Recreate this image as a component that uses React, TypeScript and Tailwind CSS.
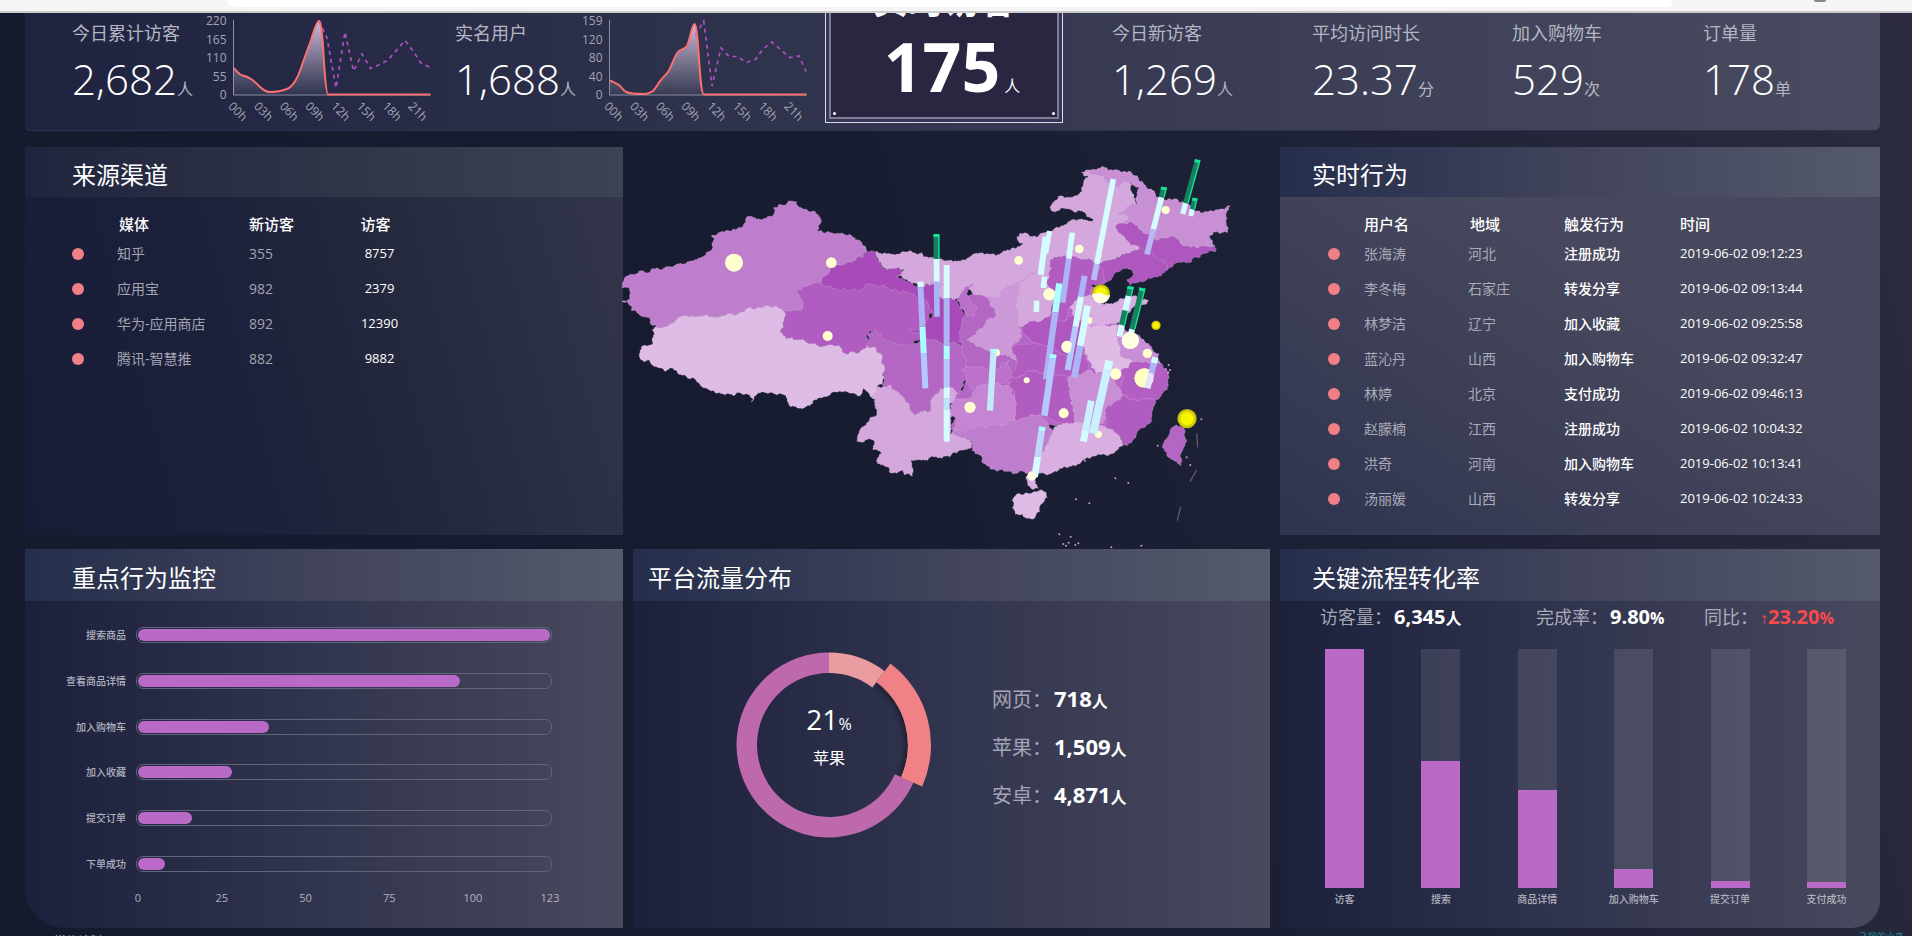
import React from "react";

type Pt = [number, number];

/* ---------- map geometry ---------- */

function noise(a: number, b: number, c: number, d: number): number {
  const s = Math.sin(a * 12.9898 + b * 78.233 + c * 37.719 + d * 4.581) * 43758.5453;
  return s - Math.floor(s) - 0.5;
}

// Midpoint displacement; a shared edge gets the same shape from both sides.
function roughEdge(a: Pt, b: Pt, depth: number): Pt[] {
  const dx = b[0] - a[0];
  const dy = b[1] - a[1];
  const len = Math.hypot(dx, dy);
  if (depth === 0 || len < 5) return [b];
  const flip = a[0] > b[0] || (a[0] === b[0] && a[1] > b[1]);
  const [p, q] = flip ? [b, a] : [a, b];
  const n = noise(p[0], p[1], q[0], q[1]) * Math.min(len * 0.5, 13) * (flip ? -1 : 1);
  const mid: Pt = [
    Math.round(((a[0] + b[0]) / 2 - (dy / len) * n) * 10) / 10,
    Math.round(((a[1] + b[1]) / 2 + (dx / len) * n) * 10) / 10,
  ];
  return [...roughEdge(a, mid, depth - 1), ...roughEdge(mid, b, depth - 1)];
}

function outline(src: string, depth = 5): string {
  const pts = src.split(" ").map((p) => p.split(",").map(Number) as Pt);
  const out: Pt[] = [pts[0]];
  pts.forEach((p, i) => out.push(...roughEdge(p, pts[(i + 1) % pts.length], depth)));
  return "M" + out.map((p) => p.join(" ")).join("L") + "Z";
}

const WEST: [string, string][] = [
  ["#b466c4", "825,568 850,600 900,612 935,612 985,600 1020,608 1070,612 1130,625 1250,650 1255,700 1140,700 1095,720 1080,765 1050,740 1020,745 990,785 990,815 945,825 905,765 870,735 850,750 848,700 846,650 825,620 800,618 803,580"],
  ["#bf7dcd", "66,430 82,408 130,393 150,397 200,380 250,372 310,350 318,338 338,324 335,285 395,272 410,268 445,228 460,233 500,234 516,230 520,203 560,193 565,183 590,185 600,202 620,208 645,212 655,225 664,240 650,272 668,277 735,283 780,302 802,333 790,352 740,368 690,392 662,430 585,447 597,462 612,485 600,512 550,512 515,502 480,503 430,516 350,532 318,524 300,528 235,532 205,555 172,562 155,555 152,532 120,525 95,512 98,498 65,485 88,478 90,447 66,443"],
  ["#debce5", "172,562 205,555 235,532 300,528 318,524 350,532 430,516 480,503 515,502 550,512 549,548 541,575 560,597 620,607 680,617 700,615 725,625 735,640 775,640 800,618 825,620 846,650 848,700 848,735 830,740 828,775 812,770 790,745 775,768 720,753 660,773 630,797 572,800 557,765 510,757 490,755 462,770 455,787 449,765 400,767 350,760 318,745 290,722 265,715 220,685 193,693 150,663 124,660 124,620 140,618 157,613 157,570"],
  ["#b05cc0", "585,447 662,430 735,445 780,455 805,432 850,435 920,455 975,480 998,515 960,560 965,585 935,612 900,612 850,600 825,568 805,578 803,610 800,618 775,640 735,640 725,625 700,615 680,617 620,607 560,597 541,575 549,548 550,512 600,512 612,485 597,462"],
  ["#a94aba", "662,430 690,392 740,368 790,352 795,335 828,335 845,370 860,388 912,385 905,405 890,408 935,430 960,440 1000,432 1035,422 1035,438 1015,445 1020,465 1035,470 1065,478 1080,500 1100,530 1120,525 1125,485 1160,500 1185,515 1185,535 1140,540 1115,570 1090,605 1070,612 1020,608 985,600 960,580 940,580 925,565 960,570 975,560 998,515 975,480 920,455 850,435 805,432 780,455 735,445"],
  ["#d5a8dd", "850,740 870,735 905,765 945,825 990,815 990,785 1020,745 1050,740 1080,765 1045,790 1055,830 1050,880 1090,890 1120,910 1100,930 1080,930 1050,950 1000,950 965,960 935,960 938,1008 915,1005 910,990 870,998 860,980 832,972 845,940 820,930 820,900 772,905 780,870 825,830 828,775 812,770 830,740"],
];

const EAST: [string, string][] = [
  ["#b466c4", "75,470 230,420 330,400 460,440 540,570 640,650 650,770 540,880 300,850 130,860 40,870 45,780 90,700 60,600"],
  ["#d5a8dd", "-192,335 -120,342 -75,338 -40,350 0,357 40,365 90,350 180,345 215,325 250,310 230,293 240,280 290,292 320,275 360,262 385,245 430,240 463,238 430,215 390,207 350,213 333,210 355,168 385,172 425,155 445,112 425,97 440,90 490,90 560,110 600,200 640,310 600,325 560,340 500,362 470,375 440,360 400,350 350,352 330,370 325,400 270,405 235,425 200,435 180,465 140,470 100,460 75,440 60,470 20,475 -5,465 -5,445 15,435 -20,432 -60,440 -85,430 -130,408 -108,390 -160,388 -175,370"],
  ["#c88fd5", "425,97 440,90 500,83 570,93 610,130 650,172 700,178 740,190 775,213 805,215 870,198 862,278 820,275 805,290 825,318 790,318 760,318 720,310 690,290 640,295 600,270 580,250 555,250 530,258 565,235 530,220 560,200 590,195 597,145 560,125 535,145 500,128 490,108 450,105"],
  ["#ae58bf", "525,258 555,250 580,250 600,270 640,295 690,290 720,310 760,318 790,318 825,318 827,335 790,340 750,368 710,368 685,385 640,345 600,325 560,300"],
  ["#ae58bf", "470,375 500,362 560,340 600,325 640,345 685,385 650,410 600,425 570,437 560,420 580,400 575,388 550,385 520,405 500,425 480,435 460,410"],
  ["#b05cc0", "325,400 330,370 350,352 400,350 440,360 470,375 490,400 500,428 455,435 450,465 410,480 390,500 380,540 350,550 325,530 345,480 325,440"],
  ["#d5a8dd", "235,425 270,405 325,400 325,440 345,480 325,530 290,545 235,555 228,500"],
  ["#cc98d8", "235,425 228,500 235,555 245,590 215,620 235,665 180,645 140,630 80,600 115,570 140,540 165,535 165,515 140,470 180,465 200,435"],
  ["#bb6fc9", "75,440 100,430 80,460 90,490 110,500 100,530 80,530 60,505 50,480"],
  ["#ae58bf", "235,555 290,545 325,530 380,540 400,525 430,560 440,600 430,640 390,650 340,630 280,610"],
  ["#d9aee0", "390,500 410,480 450,465 480,487 530,485 570,465 625,480 620,492 590,495 560,520 540,550 490,560 440,550 410,530"],
  ["#dfbbe6", "430,560 480,558 540,560 530,590 540,640 580,665 545,690 510,700 470,700 445,660 430,620"],
  ["#c98fd6", "540,560 575,580 600,590 620,610 655,640 665,672 620,665 580,665 540,640 530,590"],
  ["#b05cc0", "235,665 215,620 280,610 340,630 390,650 430,640 450,690 390,710 300,700 215,710 205,730"],
  ["#bb70ca", "65,690 120,680 170,690 205,660 215,710 180,735 130,740 110,760 90,740"],
  ["#c585d2", "40,785 90,775 110,740 180,735 210,740 225,780 225,840 130,860 35,880 50,840 30,815"],
  ["#b05cc0", "215,710 300,700 390,710 390,760 405,845 370,850 300,825 225,840 225,780"],
  ["#c88fd5", "390,710 450,690 510,700 530,740 550,765 505,795 490,850 440,850 405,845 390,760"],
  ["#b05cc0", "505,795 550,765 600,780 645,780 630,850 590,880 560,918 540,890 495,860"],
  ["#b25ec2", "545,690 580,665 620,665 665,672 685,705 680,750 645,780 600,780 550,765 530,740 550,715"],
  ["#bf7dcd", "35,880 130,860 225,840 300,825 340,870 315,920 300,960 270,998 200,995 150,985 125,965 120,945 95,930 100,905 70,893"],
  ["#d9aee0", "340,870 370,850 405,845 440,850 495,860 540,890 550,915 520,940 450,955 410,975 350,995 290,1002 270,998 300,960 315,920"],
  ["#d9aee0", "258,1010 275,998 290,1012 285,1030 295,1045 275,1047 262,1035"],
  ["#debce5", "217,1080 240,1062 290,1056 310,1053 322,1072 305,1092 300,1115 265,1135 225,1122"],
  ["#b466c4", "710,855 733,865 733,920 720,945 722,978 700,960 673,930 675,900 690,870"],
];

const LIGHT = "#d5fcff";
const LAV = "#adb4f3";
const BLUE = "#b3c8ff";
const CYAN = "#aaffff";
const GREEN = "#16805f";

type Bar = { from: Pt; to: Pt; w: number; parts: [number, string][] };

const BARS: Bar[] = [
  { from: [-11, 283], to: [-9, 530], w: 17, parts: [[357, GREEN], [425, LIGHT], [530, LAV]] },
  { from: [-59, 425], to: [-44, 745], w: 18, parts: [[442, LIGHT], [560, LAV], [640, CYAN], [745, BLUE]] },
  { from: [20, 375], to: [20, 905], w: 18, parts: [[475, LIGHT], [618, LAV], [657, CYAN], [742, BLUE], [775, LIGHT], [810, "#c0e4fb"], [905, LIGHT]] },
  { from: [161, 627], to: [150, 812], w: 19, parts: [[640, CYAN], [812, "#c3e8fc"]] },
  { from: [520, 117], to: [461, 420], w: 17, parts: [[372, LIGHT], [420, "#b3bdf8"]] },
  { from: [672, 142], to: [621, 343], w: 17, parts: [[172, GREEN], [268, LIGHT], [343, "#b9b6f5"]] },
  { from: [773, 60], to: [728, 222], w: 16, parts: [[190, GREEN], [222, LIGHT]] },
  { from: [765, 175], to: [752, 228], w: 15, parts: [[208, GREEN], [228, LIGHT]] },
  { from: [329, 273], to: [317, 340], w: 15, parts: [[340, LIGHT]] },
  { from: [317, 290], to: [302, 405], w: 18, parts: [[405, LIGHT]] },
  { from: [314, 410], to: [310, 444], w: 17, parts: [[444, LIGHT]] },
  { from: [290, 482], to: [289, 516], w: 17, parts: [[516, LIGHT]] },
  { from: [397, 278], to: [368, 488], w: 17, parts: [[357, LIGHT], [488, LAV]] },
  { from: [358, 430], to: [318, 718], w: 19, parts: [[517, CYAN], [718, LAV]] },
  { from: [434, 407], to: [383, 690], w: 18, parts: [[470, LAV], [560, LIGHT], [690, BLUE]] },
  { from: [443, 497], to: [403, 712], w: 20, parts: [[618, LIGHT], [712, LAV]] },
  { from: [340, 643], to: [313, 827], w: 20, parts: [[655, CYAN], [827, BLUE]] },
  { from: [307, 860], to: [284, 1010], w: 20, parts: [[873, CYAN], [950, "#bfd8fa"], [1010, LIGHT]] },
  { from: [508, 662], to: [459, 880], w: 24, parts: [[690, LIGHT], [880, "#c9f1ff"]] },
  { from: [454, 782], to: [430, 905], w: 21, parts: [[870, "#c9f1ff"], [905, LIGHT]] },
  { from: [572, 440], to: [538, 590], w: 18, parts: [[468, GREEN], [512, LIGHT], [555, GREEN], [590, LIGHT]] },
  { from: [607, 445], to: [562, 625], w: 18, parts: [[568, GREEN], [625, LIGHT]] },
  { from: [646, 652], to: [622, 745], w: 19, parts: [[670, LIGHT], [700, LAV], [745, "#e4e2ff"]] },
];

const DOTS: [number, number, number][] = [
  [-618, 368, 27], [-326, 368, 16], [-337, 588, 15], [236, 361, 13], [418, 327, 13],
  [328, 463, 18], [677, 210, 12], [382, 620, 18], [260, 721, 9], [90, 802, 17],
  [371, 820, 15], [475, 883, 11], [276, 1008, 14], [571, 601, 26], [622, 640, 14],
  [612, 714, 29], [527, 702, 17],
];

const SPECKS: [number, number][] = [
  [435, 962], [526, 1015], [565, 1029], [408, 1078], [448, 1090], [653, 917], [784, 838], [751, 975],
  [358, 1183], [392, 1190], [370, 1212], [378, 1217], [386, 1208], [406, 1215], [415, 1210], [514, 1222],
  [604, 1217], [686, 675], [690, 690], [678, 688], [684, 698], [740, 952],
];

function BarShape({ bar }: { bar: Bar }) {
  const { from, to, w, parts } = bar;
  const at = (y: number): number => from[0] + ((to[0] - from[0]) * (y - from[1])) / (to[1] - from[1]);
  let y0 = from[1];
  return (
    <g>
      {parts.map(([y1, color], i) => {
        const start = y0;
        y0 = y1;
        return (
          <g key={i}>
            <line x1={at(start)} y1={start} x2={at(y1)} y2={y1} stroke={color} strokeWidth={w} />
            {color === GREEN && (
              <line x1={at(start) + w / 2 - 1} y1={start} x2={at(y1) + w / 2 - 1} y2={y1} stroke="#12e594" strokeWidth={4} />
            )}
            {color === GREEN && i === 0 && (
              <line x1={at(start)} y1={start - 1} x2={at(start + 8)} y2={start + 8} stroke="#12e594" strokeWidth={w} />
            )}
          </g>
        );
      })}
    </g>
  );
}

function ChinaMap() {
  return (
    <svg viewBox="633 147 637 388" className="block w-full overflow-visible" role="img" aria-label="访客地域分布">
      <defs>
        <radialGradient id="ball">
          <stop offset="0.55" stopColor="#f8f500" />
          <stop offset="1" stopColor="#b9b010" />
        </radialGradient>
      </defs>
      <g transform="translate(600 140) scale(0.33333)" stroke="#e3c3ea" strokeOpacity={0.4} strokeWidth={2} strokeLinejoin="round">
        {WEST.map(([fill, d], i) => (
          <path key={i} d={outline(d)} fill={fill} />
        ))}
        <g transform="translate(1020 0)">
          {EAST.map(([fill, d], i) => (
            <path key={i} d={outline(d)} fill={fill} />
          ))}
        </g>
      </g>
      <g transform="translate(940 140) scale(0.33333)">
        {SPECKS.map(([x, y], i) => (
          <circle key={i} cx={x} cy={y} r={3} fill="#c79bd2" />
        ))}
        <path d="M770 880L773 922M770 990L750 1025M722 1100L712 1142" stroke="#5f5878" strokeWidth={4} />
        <circle cx={169} cy={638} r={11} fill="#ffffd0" />
        <circle cx={447} cy={541} r={10} fill="#ffffd0" />
        {DOTS.map(([x, y, r], i) => (
          <circle key={i} cx={x} cy={y} r={r} fill="#ffffd0" />
        ))}
        {BARS.map((bar, i) => (
          <BarShape key={i} bar={bar} />
        ))}
        <circle cx={571} cy={601} r={25} fill="#ffffe2" />
        <path d="M600 741A29 29 0 1 1 628 689L606 742Z" fill="#ffffbf" />
        <path d="M382 602A18 18 0 1 0 391 636L396 610Z" fill="#ffffd8" />
        <path d="M328 445A18 18 0 1 0 341 476L345 455Z" fill="#ffffd8" />
        <circle cx={276} cy={1008} r={13} fill="#ffffe2" />
        <circle cx={483} cy={460} r={27} fill="url(#ball)" />
        <path d="M456 462L480 458L500 466L510 464A27 27 0 0 1 456 462Z" fill="#ffffe0" />
        <circle cx={648} cy={556} r={14} fill="url(#ball)" />
        <circle cx={741} cy={836} r={29} fill="url(#ball)" />
      </g>
    </svg>
  );
}

/* ---------- header strip ---------- */

type TrendProps = { id: string; viewBox: string; x0: number; ticks: string[]; line: string; dashed: string; title: string };

function Trend({ id, viewBox, x0, ticks, line, dashed, title }: TrendProps) {
  return (
    <svg viewBox={viewBox} width={245} height={118} className="block shrink-0" role="img" aria-label={title}>
      <defs>
        <linearGradient id={id} x1="0" y1="0" x2="0" y2="1">
          <stop offset="0" stopColor="#d9bfe0" stopOpacity={0.95} />
          <stop offset="1" stopColor="#b9b6cc" stopOpacity={0.08} />
        </linearGradient>
      </defs>
      <g fill="#a3a5b4" fontSize={12} textAnchor="end">
        {ticks.map((t, i) => (
          <text key={t} x={x0 - 7} y={25 + i * 18.5}>{t}</text>
        ))}
      </g>
      <g fill="#a3a5b4" fontSize={12}>
        {["00h", "03h", "06h", "09h", "12h", "15h", "18h", "21h"].map((t, i) => (
          <text key={t} transform={`translate(${x0 - 6 + i * 25.7} 107) rotate(45)`}>{t}</text>
        ))}
      </g>
      <path d={`M${x0} 20V95H${x0 + 197}`} fill="none" stroke="#8c8fa3" strokeWidth={1} />
      <path d={`${line}L${x0} 94.5Z`} fill={`url(#${id})`} />
      <path d={dashed} fill="none" stroke="#b04fc2" strokeWidth={1.7} strokeDasharray="4 4" />
      <path d={`${line}H${x0 + 197}`} fill="none" stroke="#fb716f" strokeWidth={2} />
    </svg>
  );
}

function Stat({ label, value, unit }: { label: string; value: string; unit: string }) {
  return (
    <div className="min-w-0 pt-2 whitespace-nowrap">
      <div className="text-lg leading-6 text-[#b4b6c2]">{label}</div>
      <div className="mt-1.5 leading-[56px]">
        <span className="text-[42px] font-light text-white">{value}</span>
        <span className="text-base text-[#b4b6c2]">{unit}</span>
      </div>
    </div>
  );
}

function Summary() {
  return (
    <section className="grid h-[118px] shrink-0 grid-cols-[128fr_255fr_121fr_249fr_287fr_200fr_200fr_191fr_177fr] overflow-hidden rounded-b-md border-b border-[#30344a] bg-linear-to-r from-[#1f2340] via-[#343750] to-[#494b60] pl-[47px]">
      <Stat label="今日累计访客" value="2,682" unit="人" />
      <Trend
        id="trend-visitors"
        title="今日累计访客趋势"
        viewBox="200 13 245 118"
        x0={233.5}
        ticks={["220", "165", "110", "55", "0"]}
        line="M233.5 68C238 72 239 75 243 75.5C250 77 254 81 259 86C263 90 266 92 270 92C276 92 282 91 287 89C294 86 298 78 302 65L311 40C314 30 317 21 319 21C321 21 322 34 323 45C324 65 326 94.5 328 94.5"
        dashed="M319 21L327 38L336 88L345 32L353.5 71L362 54L370.6 68.5L381 64L388 60L405 40.5L413 51L421 63L431 68"
      />
      <Stat label="实名用户" value="1,688" unit="人" />
      <Trend
        id="trend-users"
        title="实名用户趋势"
        viewBox="576 13 245 118"
        x0={609.5}
        ticks={["159", "120", "80", "40", "0"]}
        line="M610 80.5C613 82 616 83 619 85C622 88 624 91 626 92C629 93.5 639 94 644 94C648 94 651 92 653 91C657 87 658 83 661 80C664 76 666 75 669 70.5C673 63 675 54 679 51C682 49 685 49 687 46C690 40 692 24 694.5 24C696 24 697 34 698 44C700 74 701 94.5 704 94.5"
        dashed="M695.5 35L703.7 21L712 86L721 48L729 56.5L737.5 56.5L746.5 62.5L756 59L763 49L772 42L781 50L790 57.5L799 56L806 71.5"
      />
      <div className="flex h-[110px] w-[238px] flex-col justify-end border border-t-0 border-[#d9dae2] bg-[#35365a] px-[3px] pb-[3px]">
        <div className="flex flex-col items-center border-2 border-t-0 border-[#7d7c92] bg-[#2a2641] whitespace-nowrap text-white">
          <div className="text-4xl leading-10 font-bold">实时访客</div>
          <div className="mt-[11px] flex items-baseline gap-1 pb-3 pl-4">
            <span className="text-[68px] leading-[68px] font-bold">175</span>
            <span className="text-base leading-4">人</span>
          </div>
          <div className="flex w-full justify-between px-0.5 pb-0.5">
            <span className="size-[3px] rounded-full bg-white" />
            <span className="size-[3px] rounded-full bg-white" />
          </div>
        </div>
      </div>
      <Stat label="今日新访客" value="1,269" unit="人" />
      <Stat label="平均访问时长" value="23.37" unit="分" />
      <Stat label="加入购物车" value="529" unit="次" />
      <Stat label="订单量" value="178" unit="单" />
    </section>
  );
}

/* ---------- cards ---------- */

const HEAD = "flex shrink-0 items-center pt-1.5 text-2xl text-white ";
const HEAD_BRIGHT = "bg-linear-to-r from-[#252e4c] via-[#41445c] to-[#555a6b] ";
const BODY = "bg-linear-to-r from-[#1c203c] via-[#32354f] to-[#49495e] ";

function Dot() {
  return <span className="block size-3 rounded-full bg-[#f08086]" />;
}

const CHANNELS = [
  ["知乎", "355", "8757"],
  ["应用宝", "982", "2379"],
  ["华为-应用商店", "892", "12390"],
  ["腾讯-智慧推", "882", "9882"],
];

function Channels() {
  return (
    <section className="flex min-w-0 flex-col bg-[linear-gradient(75deg,#181d36_0%,#1c203b_35%,#252a3e_65%,#34374c_100%)]">
      <h2 className={HEAD + "h-[50px] bg-linear-to-r from-[#20253f] via-[#2f3447] to-[#3e4255] pl-[47px]"}>来源渠道</h2>
      <table className="mt-[15px] ml-[47px] w-[380px] table-fixed border-collapse text-left whitespace-nowrap">
        <colgroup>
          <col className="w-[45px]" />
          <col className="w-[132px]" />
          <col className="w-[82px]" />
          <col />
        </colgroup>
        <thead>
          <tr className="h-6 text-[15px] leading-6 text-white">
            <th aria-label="状态" />
            <th className="pl-0.5 font-medium">媒体</th>
            <th className="font-medium">新访客</th>
            <th className="pr-8 text-center font-medium">访客</th>
          </tr>
        </thead>
        <tbody>
          {CHANNELS.map(([name, fresh, total]) => (
            <tr key={name} className="h-[35px] text-sm text-[#a3a5b2]">
              <td><Dot /></td>
              <td>{name}</td>
              <td>{fresh}</td>
              <td className="pr-6 text-center text-[13px] font-medium text-white">{total}</td>
            </tr>
          ))}
        </tbody>
      </table>
    </section>
  );
}

const EVENTS = [
  ["张海涛", "河北", "注册成功", "2019-06-02 09:12:23"],
  ["李冬梅", "石家庄", "转发分享", "2019-06-02 09:13:44"],
  ["林梦洁", "辽宁", "加入收藏", "2019-06-02 09:25:58"],
  ["蓝沁丹", "山西", "加入购物车", "2019-06-02 09:32:47"],
  ["林婷", "北京", "支付成功", "2019-06-02 09:46:13"],
  ["赵朦楠", "江西", "注册成功", "2019-06-02 10:04:32"],
  ["洪奇", "河南", "加入购物车", "2019-06-02 10:13:41"],
  ["汤丽媛", "山西", "转发分享", "2019-06-02 10:24:33"],
];

function Events() {
  return (
    <section className="flex min-w-0 flex-col bg-[linear-gradient(35deg,#2f3350_0%,#3b3e56_30%,#47485d_60%)]">
      <h2 className={HEAD + HEAD_BRIGHT + "h-[50px] pl-8"}>实时行为</h2>
      <table className="mt-[15px] ml-12 w-[520px] table-fixed border-collapse text-left whitespace-nowrap">
        <colgroup>
          <col className="w-9" />
          <col className="w-[104px]" />
          <col className="w-24" />
          <col className="w-[116px]" />
          <col />
        </colgroup>
        <thead>
          <tr className="h-6 text-[15px] leading-6 text-white">
            <th aria-label="状态" />
            <th className="font-medium">用户名</th>
            <th className="pl-0.5 font-medium">地域</th>
            <th className="font-medium">触发行为</th>
            <th className="font-medium">时间</th>
          </tr>
        </thead>
        <tbody>
          {EVENTS.map(([name, area, action, time]) => (
            <tr key={name} className="h-[35px] text-sm text-[#a9abb8]">
              <td><Dot /></td>
              <td>{name}</td>
              <td>{area}</td>
              <td className="font-medium text-white">{action}</td>
              <td className="text-[13px] text-white">{time}</td>
            </tr>
          ))}
        </tbody>
      </table>
    </section>
  );
}

const ACTIONS: [string, number][] = [
  ["搜索商品", 123],
  ["查看商品详情", 96],
  ["加入购物车", 39],
  ["加入收藏", 28],
  ["提交订单", 16],
  ["下单成功", 8],
];

function Monitor() {
  return (
    <section className={BODY + "flex min-w-0 flex-col overflow-hidden rounded-bl-[40px]"}>
      <h2 className={HEAD + HEAD_BRIGHT + "h-[52px] pl-[47px]"}>重点行为监控</h2>
      <div className="flex flex-1 flex-col pt-[26px] pr-[71px] pb-[22px]">
        <ul className="flex flex-1 flex-col justify-between">
          {ACTIONS.map(([name, n]) => (
            <li key={name} className="flex items-center gap-[10px]">
              <span className="w-[101px] shrink-0 text-right text-[10px] leading-4 font-medium text-[#b0b2be]">{name}</span>
              <span className="flex h-4 flex-1 items-center rounded-[7px] border border-[#62657a] px-px">
                <span className="h-3 rounded-md bg-[#b96ac7]" style={{ width: `${(n / 123) * 100}%` }} />
              </span>
            </li>
          ))}
        </ul>
        <div className="mt-[18px] mr-0.5 ml-[113px] grid grid-cols-[25fr_25fr_25fr_25fr_23fr_0fr] text-[11px] leading-4 text-[#b0b2be]">
          {["0", "25", "50", "75", "100", "123"].map((t) => (
            <span key={t} className="flex w-0 justify-center">{t}</span>
          ))}
        </div>
      </div>
    </section>
  );
}

function ring(cx: number, cy: number, r0: number, r1: number, a0: number, a1: number): string {
  const p = (r: number, a: number) => {
    const t = ((a - 90) * Math.PI) / 180;
    return `${(cx + r * Math.cos(t)).toFixed(2)} ${(cy + r * Math.sin(t)).toFixed(2)}`;
  };
  const big = a1 - a0 > 180 ? 1 : 0;
  return `M${p(r1, a0)}A${r1} ${r1} 0 ${big} 1 ${p(r1, a1)}L${p(r0, a1)}A${r0} ${r0} 0 ${big} 0 ${p(r0, a0)}Z`;
}

const PLATFORMS = [
  ["网页：", "718"],
  ["苹果：", "1,509"],
  ["安卓：", "4,871"],
];

function Platforms() {
  return (
    <section className={BODY + "flex min-w-0 flex-col"}>
      <h2 className={HEAD + HEAD_BRIGHT + "h-[52px] pl-[15px]"}>平台流量分布</h2>
      <div className="flex pt-10 pl-[92px]">
        <div className="grid size-[208px] shrink-0 place-items-center *:col-start-1 *:row-start-1">
          <svg viewBox="0 0 208 208" className="size-full" role="img" aria-label="平台占比">
            <defs>
              <filter id="sector-shadow" x="-30%" y="-30%" width="160%" height="160%">
                <feDropShadow dx="0" dy="0" stdDeviation="5" floodColor="#000" floodOpacity="0.75" />
              </filter>
              <clipPath id="sector-inside">
                <circle cx="104" cy="104" r="80" />
              </clipPath>
            </defs>
            <g clipPath="url(#sector-inside)">
              <path d={ring(104, 104, 79, 102, 37, 114)} fill="#f08186" filter="url(#sector-shadow)" />
            </g>
            <path d={ring(104, 104, 72, 92.5, 0, 37)} fill="#ea9ca1" />
            <path d={ring(104, 104, 72, 92.5, 114, 360)} fill="#be69ac" />
            <path d={ring(104, 104, 79, 102, 37, 114)} fill="#f08186" />
          </svg>
          <div className="pb-5 text-center whitespace-nowrap text-white">
            <div className="leading-10">
              <span className="text-[28px]">21</span>
              <span className="text-base">%</span>
            </div>
            <div className="text-base leading-7">苹果</div>
          </div>
        </div>
        <ul className="ml-[59px] flex flex-col gap-2 pt-[37px] text-xl leading-10 whitespace-nowrap">
          {PLATFORMS.map(([name, n]) => (
            <li key={name} className="flex h-10 items-baseline">
              <span className="w-[62px] text-[#a3a5b2]">{name}</span>
              <span className="text-[22px] font-bold text-white">{n}</span>
              <span className="text-base font-bold text-white">人</span>
            </li>
          ))}
        </ul>
      </div>
    </section>
  );
}

const STEPS: [string, number][] = [
  ["访客", 100],
  ["搜索", 53],
  ["商品详情", 41],
  ["加入购物车", 8],
  ["提交订单", 3],
  ["支付成功", 2.4],
];

function Funnel() {
  return (
    <section className={BODY + "flex min-w-0 flex-col overflow-hidden rounded-br-[28px]"}>
      <h2 className={HEAD + HEAD_BRIGHT + "h-[52px] pl-8"}>关键流程转化率</h2>
      <dl className="grid grid-cols-[216fr_168fr_176fr] pl-10 text-lg leading-8 whitespace-nowrap">
        <div className="flex items-baseline">
          <dt className="w-[74px] text-[#a3a5b2]">访客量：</dt>
          <dd className="text-xl leading-8 font-bold text-white">6,345<span className="text-base">人</span></dd>
        </div>
        <div className="flex items-baseline">
          <dt className="w-[74px] text-[#a9abb8]">完成率：</dt>
          <dd className="text-xl leading-8 font-bold text-white">9.80<span className="text-base">%</span></dd>
        </div>
        <div className="flex items-baseline">
          <dt className="w-[56px] text-[#a9abb8]">同比：</dt>
          <dd className="text-xl leading-8 font-bold text-[#f8494d]"><span className="font-['Liberation_Sans',sans-serif] text-base font-normal">↑</span>23.20<span className="text-base">%</span></dd>
        </div>
      </dl>
      <ul className="mt-4 mr-[34px] mb-[21px] ml-[45px] flex flex-1 justify-between">
        {STEPS.map(([name, pct]) => (
          <li key={name} className="flex w-[39px] flex-col items-center">
            <span className="flex w-full flex-1 flex-col justify-end bg-white/10">
              <span className="bg-[#b96ac7]" style={{ height: `${pct}%` }} />
            </span>
            <span className="mt-[3px] text-[10px] leading-4 font-medium whitespace-nowrap text-[#b0b2be]">{name}</span>
          </li>
        ))}
      </ul>
    </section>
  );
}

/* ---------- page ---------- */

export default function App() {
  return (
    <div className="flex h-screen flex-col overflow-hidden bg-[linear-gradient(75deg,#161a2d_0%,#181c31_45%,#1e2236_70%,#2c2b3f_100%)] font-['Open_Sans','Noto_Sans_CJK_SC',sans-serif]">
      <header className="flex h-[13px] shrink-0 items-start border-b-2 border-[#cbcbcb] bg-[#f5f5f5] pr-[86px] pl-[227px]">
        <div className="mr-[141px] h-[7px] flex-1 rounded-b-md bg-white" />
        <span className="h-0.5 w-3 rounded-b-full bg-[#8d8784]" />
      </header>
      <main className="flex shrink-0 flex-col pr-8 pl-[25px]">
        <Summary />
        <div className="mt-4 grid h-[388px] shrink-0 grid-cols-[598fr_637fr_600fr] gap-x-[10px]">
          <Channels />
          <ChinaMap />
          <Events />
        </div>
        <div className="mt-[14px] grid h-[379px] shrink-0 grid-cols-[598fr_637fr_600fr] gap-x-[10px]">
          <Monitor />
          <Platforms />
          <Funnel />
        </div>
      </main>
      <footer className="flex shrink-0 justify-between pt-1 pr-2 pl-[54px]">
        <span className="pt-0.5 text-xs text-[#c9cad3]">媒体计划</span>
        <span className="text-[9px] leading-[10px] text-[#17888f]">一飞翔的小鸟</span>
      </footer>
    </div>
  );
}
